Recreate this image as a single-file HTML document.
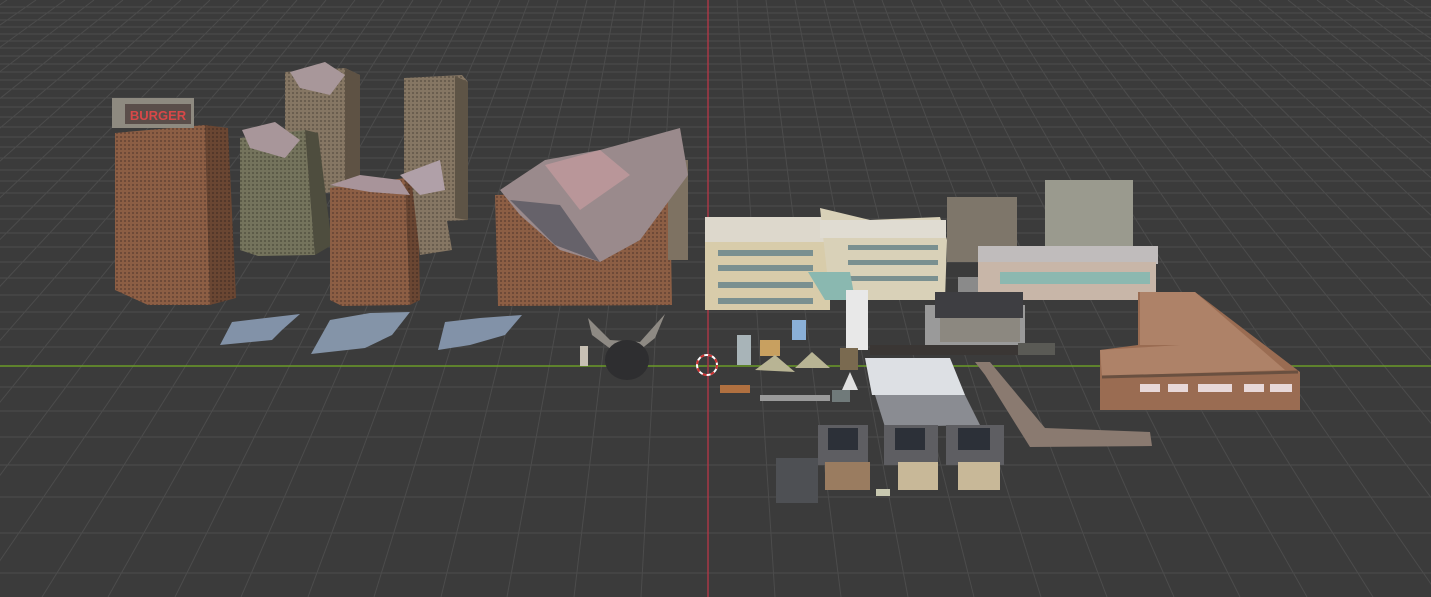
<!DOCTYPE html>
<html><head><meta charset="utf-8"><style>
html,body{margin:0;padding:0;background:#3b3b3b;overflow:hidden}
svg{display:block}
</style></head><body>
<svg width="1431" height="597" viewBox="0 0 1431 597" xmlns="http://www.w3.org/2000/svg">
<defs>
<pattern id="win" width="4" height="4" patternUnits="userSpaceOnUse"><rect width="4" height="4" fill="#8c5e44"/><rect width="2" height="2" fill="#6e4a38"/></pattern>
<pattern id="win2" width="4" height="4" patternUnits="userSpaceOnUse"><rect width="4" height="4" fill="#6a4632"/><rect width="2" height="2" fill="#54382a"/></pattern>
<pattern id="wing" width="4" height="4" patternUnits="userSpaceOnUse"><rect width="4" height="4" fill="#74735c"/><rect width="2" height="2" fill="#5c5b48"/></pattern>
<pattern id="wint" width="4" height="4" patternUnits="userSpaceOnUse"><rect width="4" height="4" fill="#857663"/><rect width="2" height="2" fill="#6a5e4f"/></pattern>
</defs>
<rect width="1431" height="597" fill="#3b3b3b"/>
<g stroke="#4c4c4c" stroke-width="1">
<line x1="0" y1="7" x2="1431" y2="7"/><line x1="0" y1="13" x2="1431" y2="13"/><line x1="0" y1="20" x2="1431" y2="20"/><line x1="0" y1="27" x2="1431" y2="27"/><line x1="0" y1="34" x2="1431" y2="34"/><line x1="0" y1="41" x2="1431" y2="41"/><line x1="0" y1="48" x2="1431" y2="48"/><line x1="0" y1="56" x2="1431" y2="56"/><line x1="0" y1="64" x2="1431" y2="64"/><line x1="0" y1="72" x2="1431" y2="72"/><line x1="0" y1="80" x2="1431" y2="80"/><line x1="0" y1="89" x2="1431" y2="89"/><line x1="0" y1="98" x2="1431" y2="98"/><line x1="0" y1="107" x2="1431" y2="107"/><line x1="0" y1="117" x2="1431" y2="117"/><line x1="0" y1="127" x2="1431" y2="127"/><line x1="0" y1="137" x2="1431" y2="137"/><line x1="0" y1="147" x2="1431" y2="147"/><line x1="0" y1="158" x2="1431" y2="158"/><line x1="0" y1="170" x2="1431" y2="170"/><line x1="0" y1="181" x2="1431" y2="181"/><line x1="0" y1="193" x2="1431" y2="193"/><line x1="0" y1="206" x2="1431" y2="206"/><line x1="0" y1="219" x2="1431" y2="219"/><line x1="0" y1="233" x2="1431" y2="233"/><line x1="0" y1="247" x2="1431" y2="247"/><line x1="0" y1="262" x2="1431" y2="262"/><line x1="0" y1="278" x2="1431" y2="278"/><line x1="0" y1="295" x2="1431" y2="295"/><line x1="0" y1="312" x2="1431" y2="312"/><line x1="0" y1="329" x2="1431" y2="329"/><line x1="0" y1="347" x2="1431" y2="347"/><line x1="0" y1="387" x2="1431" y2="387"/><line x1="0" y1="411" x2="1431" y2="411"/><line x1="0" y1="437" x2="1431" y2="437"/><line x1="0" y1="465" x2="1431" y2="465"/><line x1="0" y1="497" x2="1431" y2="497"/><line x1="0" y1="533" x2="1431" y2="533"/><line x1="0" y1="573" x2="1431" y2="573"/>
<line x1="7" y1="0" x2="-889" y2="597"/><line x1="36" y1="0" x2="-823" y2="597"/><line x1="65" y1="0" x2="-756" y2="597"/><line x1="94" y1="0" x2="-690" y2="597"/><line x1="123" y1="0" x2="-623" y2="597"/><line x1="152" y1="0" x2="-557" y2="597"/><line x1="181" y1="0" x2="-490" y2="597"/><line x1="210" y1="0" x2="-424" y2="597"/><line x1="239" y1="0" x2="-357" y2="597"/><line x1="268" y1="0" x2="-291" y2="597"/><line x1="297" y1="0" x2="-224" y2="597"/><line x1="326" y1="0" x2="-158" y2="597"/><line x1="355" y1="0" x2="-91" y2="597"/><line x1="384" y1="0" x2="-25" y2="597"/><line x1="413" y1="0" x2="42" y2="597"/><line x1="442" y1="0" x2="108" y2="597"/><line x1="471" y1="0" x2="175" y2="597"/><line x1="500" y1="0" x2="241" y2="597"/><line x1="529" y1="0" x2="308" y2="597"/><line x1="558" y1="0" x2="374" y2="597"/><line x1="587" y1="0" x2="441" y2="597"/><line x1="616" y1="0" x2="507" y2="597"/><line x1="645" y1="0" x2="574" y2="597"/><line x1="674" y1="0" x2="641" y2="597"/>
<line x1="737" y1="0" x2="775" y2="597"/><line x1="766" y1="0" x2="841" y2="597"/><line x1="795" y1="0" x2="908" y2="597"/><line x1="824" y1="0" x2="974" y2="597"/><line x1="853" y1="0" x2="1041" y2="597"/><line x1="882" y1="0" x2="1107" y2="597"/><line x1="911" y1="0" x2="1174" y2="597"/><line x1="940" y1="0" x2="1240" y2="597"/><line x1="969" y1="0" x2="1307" y2="597"/><line x1="998" y1="0" x2="1373" y2="597"/><line x1="1027" y1="0" x2="1440" y2="597"/><line x1="1056" y1="0" x2="1506" y2="597"/><line x1="1085" y1="0" x2="1573" y2="597"/><line x1="1114" y1="0" x2="1639" y2="597"/><line x1="1143" y1="0" x2="1706" y2="597"/><line x1="1172" y1="0" x2="1772" y2="597"/><line x1="1201" y1="0" x2="1839" y2="597"/><line x1="1230" y1="0" x2="1905" y2="597"/><line x1="1259" y1="0" x2="1972" y2="597"/><line x1="1288" y1="0" x2="2038" y2="597"/><line x1="1317" y1="0" x2="2105" y2="597"/><line x1="1346" y1="0" x2="2171" y2="597"/><line x1="1375" y1="0" x2="2238" y2="597"/><line x1="1404" y1="0" x2="2304" y2="597"/><line x1="1433" y1="0" x2="2371" y2="597"/>
</g>
<line x1="0" y1="366" x2="1431" y2="366" stroke="#6b9a28" stroke-width="1.5"/>
<line x1="708" y1="0" x2="708" y2="597" stroke="#a83846" stroke-width="1.5"/>

<!-- back towers -->
<polygon points="285,72 345,68 360,75 360,190 300,195 285,190" fill="url(#wint)"/>
<polygon points="345,68 360,75 360,190 345,188" fill="#5e5244"/>
<polygon points="290,72 325,62 345,75 330,95 300,88" fill="#a8979a"/>
<polygon points="404,78 462,75 468,82 468,220 420,222 404,218" fill="url(#wint)"/>
<polygon points="455,76 468,82 468,220 455,218" fill="#5e5446"/>
<!-- burger -->
<polygon points="115,133 205,125 210,305 148,305 115,290" fill="url(#win)"/>
<polygon points="205,125 228,128 236,298 210,305" fill="url(#win2)"/>
<rect x="112" y="98" width="82" height="30" fill="#8e8a80"/>
<rect x="125" y="104" width="66" height="20" fill="#5a4e4a"/>
<text x="158" y="120" font-family="Liberation Sans, sans-serif" font-size="13" font-weight="bold" fill="#d84848" text-anchor="middle">BURGER</text>
<!-- green -->
<polygon points="240,138 305,130 315,255 258,256 240,250" fill="url(#wing)"/>
<polygon points="305,130 318,133 332,245 315,255" fill="#4e4d3e"/>
<polygon points="242,130 275,122 300,140 285,158 250,148" fill="#a8969a"/>
<!-- middle -->
<polygon points="330,188 405,178 410,305 342,306 330,300" fill="url(#win)"/>
<polygon points="405,178 418,184 420,300 410,305" fill="url(#win2)"/>
<polygon points="412,185 440,180 452,250 420,255" fill="url(#wint)"/>
<polygon points="330,185 360,175 400,180 410,195 370,192" fill="#a8949a"/>
<polygon points="400,175 440,160 445,190 420,195" fill="#b0a0a8"/>
<!-- ruined big -->
<polygon points="495,195 670,188 672,305 498,306" fill="url(#win)"/>
<rect x="668" y="160" width="20" height="100" fill="#7e7262"/>
<polygon points="500,190 545,160 600,150 680,128 688,175 640,240 600,262 560,250 520,215" fill="#9a8a8c"/>
<polygon points="545,165 600,150 630,175 580,210" fill="#c0989c" opacity=".8"/>
<polygon points="510,200 560,205 600,262 555,245" fill="#66626a"/>
<!-- rubble -->
<polygon points="220,345 232,322 300,314 282,330 272,340" fill="#8292a8"/>
<polygon points="311,354 330,320 370,313 410,312 392,335 365,348" fill="#8494a8"/>
<polygon points="438,350 445,322 480,318 522,315 505,335 470,345" fill="#8292a8"/>
<!-- moth -->
<polygon points="588,318 610,340 640,342 665,314 655,338 640,350 612,350 592,335" fill="#8e8a84"/>
<ellipse cx="627" cy="360" rx="22" ry="20" fill="#2e2e30"/>
<rect x="580" y="346" width="8" height="20" fill="#c8c0b4"/>
<!-- beige buildings -->
<polygon points="705,217 810,217 830,240 830,310 705,310" fill="#d8ccaa"/>
<rect x="705" y="217" width="120" height="25" fill="#ddd8cc"/>
<polygon points="820,208 870,220 940,217 947,240 945,300 830,300" fill="#d9d1b8"/>
<rect x="820" y="220" width="126" height="18" fill="#e0dcd2"/>
<g fill="#7a9090"><rect x="718" y="250" width="95" height="6"/><rect x="718" y="265" width="95" height="6"/><rect x="718" y="282" width="95" height="6"/><rect x="718" y="298" width="95" height="6"/><rect x="848" y="245" width="90" height="5"/><rect x="848" y="260" width="90" height="5"/><rect x="848" y="276" width="90" height="5"/></g>
<polygon points="808,272 850,272 855,300 825,300" fill="#8ab8b0"/>
<rect x="846" y="290" width="22" height="60" fill="#e8e8e8"/>
<!-- small back buildings -->
<rect x="947" y="197" width="70" height="65" fill="#7e766a"/>
<rect x="1045" y="180" width="88" height="66" fill="#9a9a8e"/>
<!-- diner -->
<rect x="978" y="246" width="180" height="18" fill="#c0bcbc"/>
<rect x="978" y="262" width="178" height="38" fill="#c8b6a8"/>
<rect x="1000" y="272" width="150" height="12" fill="#8cb8b0"/>
<rect x="958" y="277" width="20" height="25" fill="#8a8a8a"/>
<!-- dark flat -->
<rect x="925" y="305" width="100" height="40" fill="#9a9a9a"/>
<rect x="935" y="292" width="88" height="26" fill="#3e3e42"/>
<rect x="940" y="318" width="80" height="24" fill="#8c8880"/>
<!-- L brick -->
<polygon points="1138,292 1195,292 1300,372 1300,410 1100,410 1100,350 1138,345" fill="#9a6c52"/>
<polygon points="1100,350 1180,345 1140,345 1140,292 1195,292 1285,370 1102,376" fill="#ae8268"/>
<line x1="1102" y1="377" x2="1298" y2="372" stroke="#6a5040" stroke-width="3"/>
<g fill="#e8d8d8"><rect x="1140" y="384" width="20" height="8"/><rect x="1168" y="384" width="20" height="8"/><rect x="1198" y="384" width="34" height="8"/><rect x="1244" y="384" width="20" height="8"/><rect x="1270" y="384" width="22" height="8"/></g>
<!-- misc props -->
<rect x="737" y="335" width="14" height="30" fill="#a8b4b8"/>
<rect x="760" y="340" width="20" height="16" fill="#c8a060"/>
<rect x="792" y="320" width="14" height="20" fill="#8ab0d8"/>
<polygon points="755,370 775,355 795,372" fill="#b8b494"/>
<polygon points="795,368 812,352 830,368" fill="#b8b494"/>
<polygon points="842,390 850,372 858,390" fill="#e0e0e0"/>
<rect x="840" y="348" width="18" height="22" fill="#7a6a50"/>
<rect x="720" y="385" width="30" height="8" fill="#b07040"/>
<rect x="760" y="395" width="70" height="6" fill="#9a9a9a"/>
<rect x="832" y="390" width="18" height="12" fill="#707a7a"/>
<rect x="870" y="345" width="185" height="10" fill="#3a3634"/>
<rect x="1018" y="343" width="37" height="12" fill="#5a5a55"/>
<!-- white plane & gray -->
<polygon points="865,358 950,358 965,395 872,395" fill="#dde0e4"/>
<polygon points="875,395 965,395 980,425 885,427" fill="#8a8c92"/>
<!-- boardwalk -->
<polygon points="975,362 990,362 1045,428 1150,432 1152,446 1030,447 985,375" fill="#8a7a70"/>
<!-- garages -->
<rect x="818" y="425" width="50" height="40" fill="#5e5e62"/><rect x="828" y="428" width="30" height="22" fill="#2c3038"/><rect x="825" y="462" width="45" height="28" fill="#9a7c60"/>
<rect x="884" y="425" width="54" height="40" fill="#5e5e62"/><rect x="895" y="428" width="30" height="22" fill="#2c3038"/><rect x="898" y="462" width="40" height="28" fill="#c8b898"/>
<rect x="946" y="425" width="58" height="40" fill="#5e5e62"/><rect x="958" y="428" width="32" height="22" fill="#2c3038"/><rect x="958" y="462" width="42" height="28" fill="#c8b898"/>
<rect x="776" y="458" width="42" height="45" fill="#4e5054"/>
<rect x="876" y="489" width="14" height="7" fill="#c8c8b0"/>
<!-- 3d cursor -->
<circle cx="707" cy="365" r="10" fill="none" stroke="#ffffff" stroke-width="2"/>
<circle cx="707" cy="365" r="10" fill="none" stroke="#d03030" stroke-width="2" stroke-dasharray="4 4"/>
</svg>
</body></html>
